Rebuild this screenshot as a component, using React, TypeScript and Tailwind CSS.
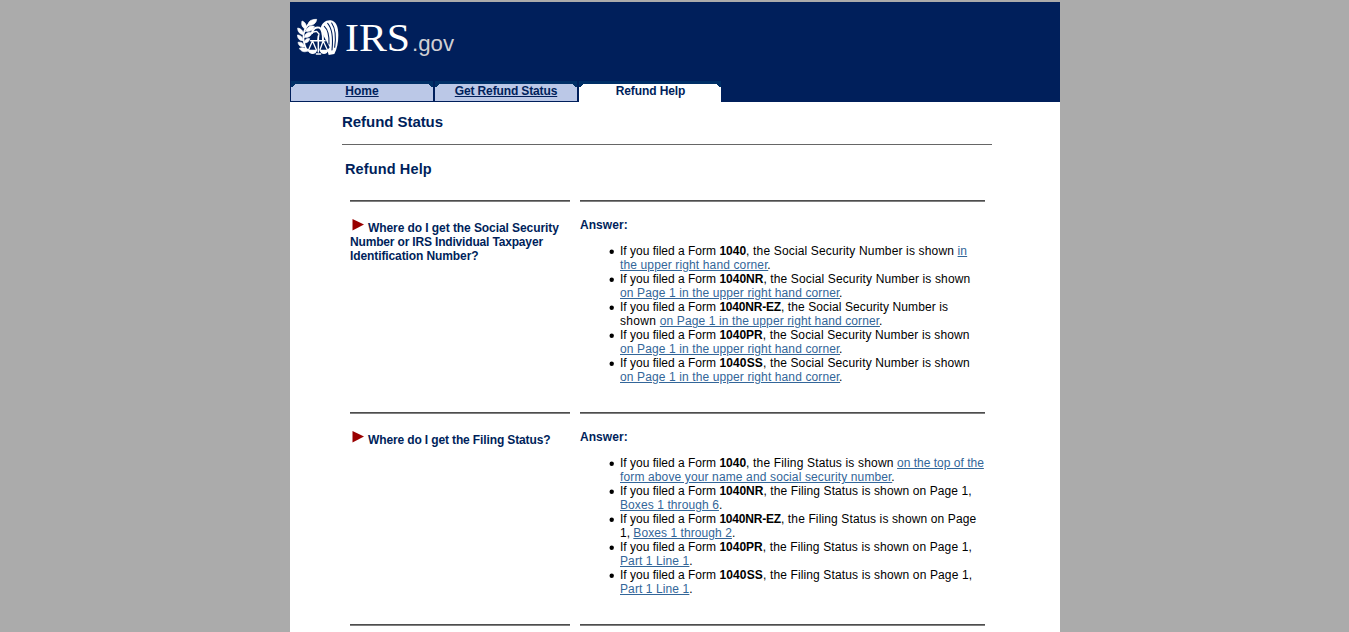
import type { ReactNode } from "react";

type Item = ReactNode[];

function A({ children, className = "tracking-[0.115px]" }: { children: ReactNode; className?: string }) {
  return (
    <a href="#" className={`text-[#336699] underline ${className}`}>
      {children}
    </a>
  );
}

function T({ children, className = "tracking-[0.13px]" }: { children: ReactNode; className?: string }) {
  return <span className={className}>{children}</span>;
}

function Eagle() {
  return (
    <svg className="shrink-0" width="42" height="38" viewBox="21 54 126 114" fill="none" stroke="#fff" strokeLinecap="round" strokeLinejoin="round">
      <path d="M64 66C40 84 34 112 48 146L62 156" strokeWidth="5" />
      <g fill="#fff" stroke="#fff" strokeWidth="2">
        <path d="M54 76C54 65 62 58 80 58C79 70 68 78 54 76Z" />
        <path d="M47 87C37 84 33 75 36 63C47 67 51 76 47 87Z" />
        <path d="M47 94C50 82 60 76 73 79C70 91 60 96 47 94Z" />
        <path d="M40 104C30 103 23 96 23 84C34 86 41 94 40 104Z" />
        <path d="M43 112C44 101 53 95 66 98C63 109 54 114 43 112Z" />
        <path d="M39 122C30 123 23 117 22 105C32 105 39 112 39 122Z" />
        <path d="M42 129C44 119 50 114 59 116C57 125 51 130 42 129Z" />
        <path d="M43 140C34 143 26 138 24 127C34 125 42 130 43 140Z" />
        <path d="M53 153C44 158 33 155 28 145C39 141 49 143 53 153Z" />
      </g>
      <path
        d="M92 84C96 70 106 60 122 61C138 63 145 80 145 105C145 128 141 147 133 162L116 165L112 150L119 142L107 119L100 106Z"
        fill="#fff"
        stroke="none"
      />
      <g stroke="#001f5b" strokeWidth="3.200">
        <path d="M103 79C115 90 118 106 117 132" />
        <path d="M113 70C127 86 130 112 126 150" />
        <path d="M125 69C137 86 138 114 134 142" />
      </g>
      <path d="M66 99C68 86 78 80 88 83C97 87 99 98 99 121" strokeWidth="6" />
      <path d="M70 96L80 94L87 102L84 119" strokeWidth="4" />
      <path d="M62 122H105M85 108V156" strokeWidth="4.500" />
      <path d="M67 124L56 149M68 124L79 149M99 124L90 149M100 124L112 149" strokeWidth="4" />
      <path d="M53 149H82C79 166 57 166 53 149ZM88 149H116C112 166 92 166 88 149Z" fill="#fff" stroke="none" />
      <path d="M79 162H92" strokeWidth="4" />
    </svg>
  );
}

function Logo() {
  return (
    <div className="flex h-[79px] pt-[16px] pl-[7px]">
      <Eagle />
      <svg className="-mt-2 shrink-0" width="130" height="60" viewBox="0 -8 130 60">
        <text x="6" y="33" fill="#fff" fontFamily="'Liberation Serif', serif" fontSize="41" textLength="65" lengthAdjust="spacingAndGlyphs">
          IRS
        </text>
        <text x="73" y="33" fill="#d0d0d4" fontFamily="'Liberation Sans', sans-serif" fontSize="22" textLength="42" lengthAdjust="spacingAndGlyphs">
          .gov
        </text>
      </svg>
    </div>
  );
}

function Tab({ label, active = false, textClass = "" }: { label: string; active?: boolean; textClass?: string }) {
  return (
    <div
      className={
        active
          ? "relative h-[21px] w-[143px] border-l border-[#001f5b] bg-white"
          : "relative h-[21px] w-36 border-x border-b border-[#001f5b] bg-[#bbc8e7]"
      }
    >
      <svg className="absolute top-0 left-0" width="142" height="7" viewBox="0 0 142 7" shapeRendering="crispEdges">
        <path d="M0 0H142V6H140V5H139V4H138V3H4V4H3V5H2V6H0Z" fill="#002f66" />
      </svg>
      <div className="pt-[3px] text-center text-[12px] leading-[14px] font-bold text-[#001f5b]">
        {active ? (
          <span className={textClass}>{label}</span>
        ) : (
          <a href="#" className={`underline ${textClass}`}>
            {label}
          </a>
        )}
      </div>
    </div>
  );
}

function Rule() {
  return <div className="h-[2px] border-t border-[#4d4d4d] bg-[#808080]" />;
}

function Row({ question, items }: { question: ReactNode[]; items: Item[] }) {
  return (
    <section className="flex h-[212px] gap-[10px]">
      <div className="w-[220px] shrink-0">
        <Rule />
        <h3 className="pt-[18px] text-[12px] leading-[14px] font-bold text-[#001f5b]">
          {question.map((q, i) => (
            <span key={i} className={i === 0 ? "flex h-[15px] pt-px whitespace-nowrap" : "block whitespace-nowrap"}>
              {i === 0 && (
                <svg className="-mt-[2px] mr-[4px] ml-[2px]" width="12" height="12" viewBox="0 0 12 12">
                  <path d="M0.500 0L12 5.500L0.500 11.500Z" fill="#990000" />
                </svg>
              )}
              {q}
            </span>
          ))}
        </h3>
      </div>
      <div className="w-[405px] shrink-0">
        <Rule />
        <h4 className="pt-4 text-[12px] leading-[14px] font-bold tracking-[0.05px] text-[#001f5b]">Answer:</h4>
        <ul className="pt-3 pl-10 text-[12px] leading-[14px] text-black">
          {items.map((item, i) => (
            <li key={i} className="relative">
              <svg className="absolute top-[5px] -left-[11px]" width="6" height="6" viewBox="0 0 6 6">
                <circle cx="2.700" cy="2.700" r="2.200" fill="#000" />
              </svg>
              {item.map((line, j) => (
                <div key={j} className="whitespace-nowrap">
                  {line}
                </div>
              ))}
            </li>
          ))}
        </ul>
      </div>
    </section>
  );
}

const corner = <><A>on Page 1 in the upper right hand corner</A><T className="-ml-px">.</T></>;

const ssn: Item[] = [
  [
    <>If you filed a Form <b>1040</b><T className="tracking-[0.16px]">, the Social Security Number is shown </T><A>in</A></>,
    <><A className="tracking-[0.13px]">the upper right hand corner</A><T className="-ml-px">.</T></>,
  ],
  [<>If you filed a Form <b>1040NR</b><T>, the Social Security Number is shown</T></>, corner],
  [
    <>If you filed a Form <b className="tracking-[-0.2px]">1040NR-EZ</b><T className="tracking-[0.1px]">, the Social Security Number is</T></>,
    <><T className="tracking-[0.3px]">shown </T>{corner}</>,
  ],
  [<>If you filed a Form <b>1040PR</b><T>, the Social Security Number is shown</T></>, corner],
  [<>If you filed a Form <b className="tracking-[0.15px]">1040SS</b><T>, the Social Security Number is shown</T></>, corner],
];

const filing: Item[] = [
  [
    <>If you filed a Form <b>1040</b><T className="tracking-[0.17px]">, the Filing Status is shown </T><A className="tracking-normal">on the top of the</A></>,
    <><A className="tracking-[0.13px]">form above your name and social security number</A><T className="-ml-px">.</T></>,
  ],
  [
    <>If you filed a Form <b>1040NR</b><T className="tracking-[0.11px]">, the Filing Status is shown on Page 1,</T></>,
    <><A className="tracking-[0.09px]">Boxes 1 through 6</A>.</>,
  ],
  [
    <>If you filed a Form <b className="tracking-[-0.2px]">1040NR-EZ</b><T>, the Filing Status is shown on Page</T></>,
    <>1, <A className="tracking-[0.07px]">Boxes 1 through 2</A>.</>,
  ],
  [
    <>If you filed a Form <b>1040PR</b><T>, the Filing Status is shown on Page 1,</T></>,
    <><A className="tracking-[0.1px]">Part 1 Line 1</A>.</>,
  ],
  [
    <>If you filed a Form <b className="tracking-[0.15px]">1040SS</b><T>, the Filing Status is shown on Page 1,</T></>,
    <><A className="tracking-[0.1px]">Part 1 Line 1</A>.</>,
  ],
];

export default function App() {
  return (
    <div className="h-[632px] overflow-hidden bg-[#ababab] pt-[2px] pl-[290px] font-['Liberation_Sans',Arial,sans-serif]">
      <div className="h-[630px] w-[770px] bg-white">
        <header className="h-[100px] bg-[#001f5b]">
          <Logo />
          <nav className="flex">
            <Tab label="Home" />
            <Tab label="Get Refund Status" textClass="tracking-[-0.13px]" />
            <Tab label="Refund Help" textClass="pl-px tracking-[-0.1px]" active />
          </nav>
        </header>
        <main className="pl-[52px]">
          <h1 className="h-[43px] w-[650px] border-b border-[#666] pt-[11px] text-[15px] leading-[18px] font-bold tracking-[-0.05px] text-[#001f5b]">
            Refund Status
          </h1>
          <h2 className="h-[55px] pt-[15px] pl-[3px] text-[14.5px] leading-[18px] font-bold tracking-[0.13px] text-[#001f5b]">
            Refund Help
          </h2>
          <div className="pl-2">
            <Row
              question={[
                <T className="tracking-[-0.075px]">Where do I get the Social Security</T>,
                <T className="tracking-[-0.17px]">Number or IRS Individual Taxpayer</T>,
                <T className="tracking-[-0.1px]">Identification Number?</T>,
              ]}
              items={ssn}
            />
            <Row question={[<T className="tracking-[-0.13px]">Where do I get the Filing Status?</T>]} items={filing} />
            <div className="flex gap-[10px]">
              <div className="w-[220px]"><Rule /></div>
              <div className="w-[405px]"><Rule /></div>
            </div>
          </div>
        </main>
      </div>
    </div>
  );
}
